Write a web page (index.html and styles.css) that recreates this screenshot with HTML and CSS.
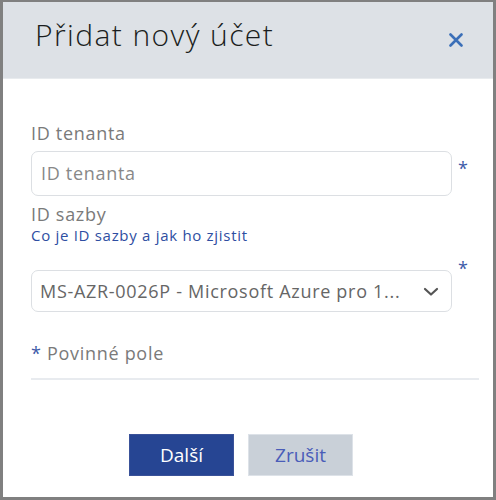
FILE: index.html
```html
<!DOCTYPE html>
<html lang="cs">
<head>
<meta charset="utf-8">
<link rel="stylesheet" href="styles.css">
</head>
<body>
<div class="dialog">
  <div class="header">
    <h1 class="title">Přidat nový účet</h1>
    <svg class="close" width="14" height="14" viewBox="0 0 14 14"><path d="M1.5 1.5 L12.5 12.5 M12.5 1.5 L1.5 12.5" stroke="#3b6fb8" stroke-width="2.6" stroke-linecap="round"/></svg>
  </div>
  <div class="content">
    <div class="label first">ID tenanta</div>
    <div class="row">
      <div class="input">ID tenanta</div>
      <span class="req req-mid">*</span>
    </div>
    <div class="label second">ID sazby</div>
    <a class="link">Co je ID sazby a jak ho zjistit</a>
    <div class="row sel-row">
      <div class="select">
        <span class="sel-text">MS-AZR-0026P - Microsoft Azure pro 1...</span>
        <svg class="chev" width="16" height="10" viewBox="0 0 16 10"><path d="M2 2 L8 7.5 L14 2" fill="none" stroke="#555" stroke-width="2.2" stroke-linecap="round" stroke-linejoin="round"/></svg>
      </div>
      <span class="req req-top">*</span>
    </div>
    <div class="note"><span class="note-star">*</span> Povinné pole</div>
    <div class="divider"></div>
    <div class="buttons">
      <button class="btn primary">Další</button>
      <button class="btn secondary">Zrušit</button>
    </div>
  </div>
</div>
</body>
</html>
```
FILE: styles.css
```css
* { box-sizing: border-box; }
html, body { margin: 0; padding: 0; background: #fff; }
body { font-family: "Open Sans", "Noto Sans", sans-serif; }
.dialog {
  width: 496px;
  height: 500px;
  border: 3px solid #808080;
  border-top-width: 2px;
  background: #fff;
  display: flex;
  flex-direction: column;
}
.header {
  height: 77px;
  background: #dde1e6;
  display: flex;
  align-items: center;
  justify-content: space-between;
  padding: 0 30px 0 32px;
  border-bottom: 1px solid #e8ebee;
}
.title {
  margin: 0;
  font-family: "Open Sans", sans-serif;
  font-weight: 300;
  font-size: 30px;
  color: #1a1d20;
  letter-spacing: 1.4px;
  position: relative;
  top: -6px;
}
.close { margin-top: 0; }
.content {
  padding: 0 0 0 28px;
  flex: 1;
  display: flex;
  flex-direction: column;
}
.label {
  font-size: 18px;
  line-height: 24px;
  color: #7a7a7a;
  letter-spacing: 0.7px;
}
.label.first { margin-top: 42px; }
.label.second { margin-top: 7px; line-height: 22px; }
.row { display: flex; align-items: flex-start; }
.input {
  margin-top: 6px;
  width: 421px;
  height: 45px;
  border: 1px solid #dcdfe3;
  border-radius: 7px;
  padding: 0 9px;
  font-size: 18px;
  line-height: 43px;
  color: #888;
  letter-spacing: 0.7px;
}
.req {
  color: #3d5aa8;
  font-size: 18px;
  margin-left: 6px;
}
.req-mid { margin-top: 11px; }
.req-top { margin-top: -14px; }
.link {
  font-size: 15px;
  line-height: 20px;
  color: #2e4ea2;
  letter-spacing: 0.7px;
}
.sel-row { margin-top: 25px; }
.select {
  width: 421px;
  height: 42px;
  border: 1px solid #dcdfe3;
  border-radius: 7px;
  padding: 0 12px 0 8px;
  display: flex;
  align-items: center;
  justify-content: space-between;
}
.sel-text {
  font-size: 18px;
  color: #666;
  letter-spacing: 0.7px;
}
.chev { margin-top: 2px; }
.note {
  margin-top: 29px;
  font-size: 18px;
  line-height: 24px;
  color: #7a7a7a;
  letter-spacing: 0.7px;
}
.note-star { color: #3d5aa8; }
.divider {
  margin-top: 13px;
  width: 448px;
  height: 2px;
  background: #e8ebef;
}
.buttons {
  margin-top: 54px;
  display: flex;
  gap: 14px;
  padding-left: 98px;
}
.btn {
  width: 105px;
  height: 42px;
  border: 1px solid transparent;
  font-family: "Open Sans", sans-serif;
  font-size: 19px;
  padding: 0;
}
.primary { background: #264593; color: #fff; border-color: #3a5299; }
.secondary { background: #c9d0d8; color: #4a5db8; border-color: #dde2e8; }
```
